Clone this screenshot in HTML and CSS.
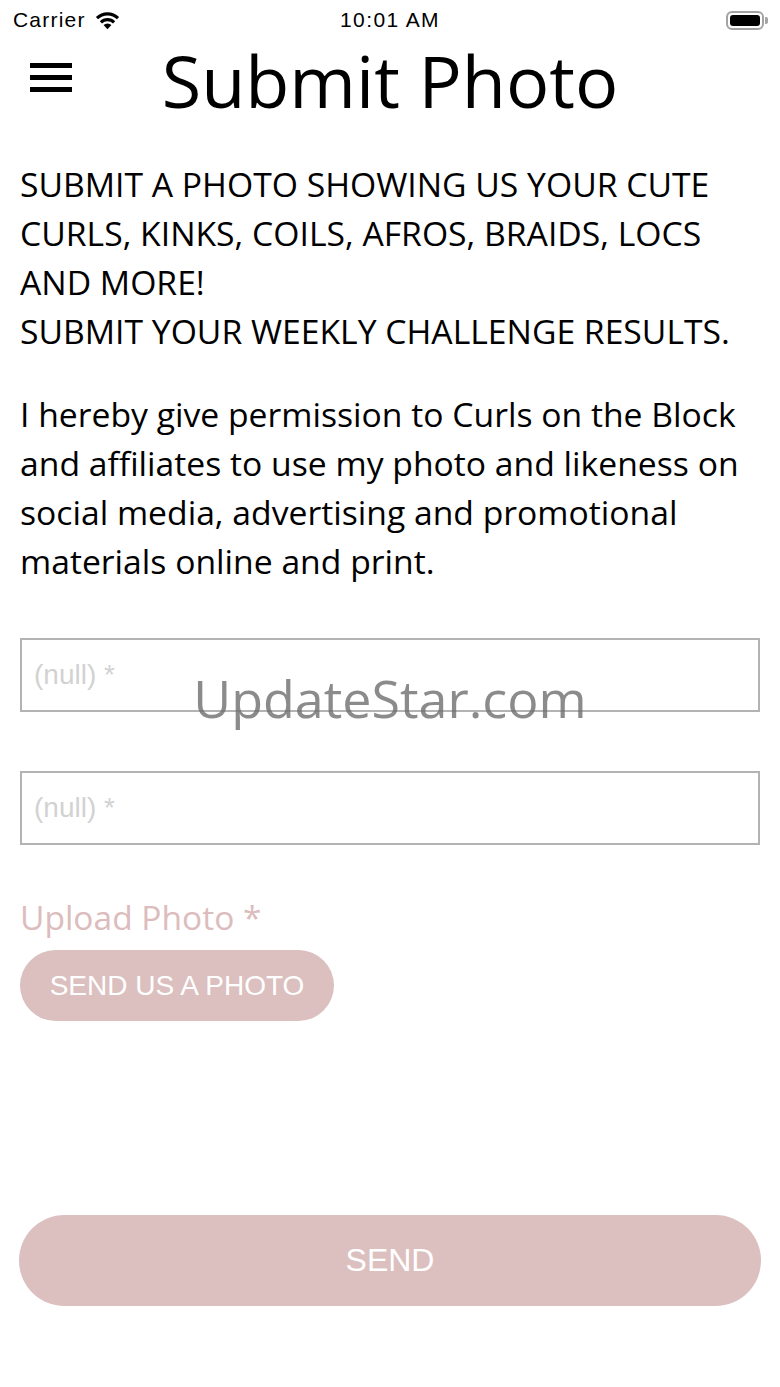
FILE: index.html
```html
<!DOCTYPE html>
<html lang="en">
<head>
    <meta charset="UTF-8">
    <meta name="viewport" content="width=device-width, initial-scale=1.0">
    <title>Submit Photo</title>
    <link rel="stylesheet" href="styles.css">
</head>
<body>
    <!-- Status bar -->
    <div class="status-bar">
        <div class="status-left">
            <span>Carrier</span>
            <svg class="wifi" width="27" height="20" viewBox="0 0 26 19">
                <path d="M13 18.5 L9.2 14.4 A5.6 5.6 0 0 1 16.8 14.4 Z" fill="#000"/>
                <path d="M5.6 10.6 A10.6 10.6 0 0 1 20.4 10.6 L18.3 12.8 A7.6 7.6 0 0 0 7.7 12.8 Z" fill="#000"/>
                <path d="M1.8 6.6 A16 16 0 0 1 24.2 6.6 L22.1 8.8 A13 13 0 0 0 3.9 8.8 Z" fill="#000"/>
            </svg>
        </div>
        <div class="status-time">10:01 AM</div>
        <div class="status-right">
            <div class="battery"><div class="battery-level"></div></div>
            <div class="battery-tip"></div>
        </div>
    </div>

    <!-- Header -->
    <div class="header">
        <div class="menu-icon">
            <span></span><span></span><span></span>
        </div>
        <h1>Submit Photo</h1>
    </div>

    <div class="content">
        <p class="intro">SUBMIT A PHOTO SHOWING US YOUR CUTE CURLS, KINKS, COILS, AFROS, BRAIDS, LOCS AND MORE!<br>SUBMIT YOUR WEEKLY CHALLENGE RESULTS.</p>

        <p class="permission">I hereby give permission to Curls on the Block and affiliates to use my photo and likeness on social media, advertising and promotional materials online and print.</p>

        <div class="fields">
            <input type="text" placeholder="(null) *">
            <input type="text" placeholder="(null) *">
            <div class="watermark">UpdateStar.com</div>
        </div>

        <div class="upload-label">Upload Photo *</div>
        <button class="photo-button">SEND US A PHOTO</button>

        <button class="send-button">SEND</button>
    </div>
</body>
</html>
```

FILE: styles.css
```css
body {
    margin: 0;
    padding: 0;
    width: 780px;
    height: 1387px;
    background-color: white;
    color: black;
    font-family: 'Open Sans', sans-serif;
    overflow: hidden;
}

.status-bar {
    height: 40px;
    display: flex;
    align-items: center;
    justify-content: space-between;
    padding: 0 12px 0 13px;
    font-family: 'Liberation Sans', Arial, sans-serif;
    font-size: 21px;
    letter-spacing: 1.2px;
    position: relative;
}

.status-left {
    display: flex;
    align-items: center;
    gap: 8px;
}

.status-time {
    position: absolute;
    left: 0;
    right: 0;
    text-align: center;
    font-size: 21px;
    letter-spacing: 1.4px;
}

.status-right {
    display: flex;
    align-items: center;
}

.battery {
    width: 38px;
    height: 19px;
    border: 2px solid #a3a3a3;
    border-radius: 6px;
    box-sizing: border-box;
    padding: 2px;
}

.battery-level {
    width: 100%;
    height: 100%;
    background-color: black;
    border-radius: 3px;
}

.battery-tip {
    width: 3px;
    height: 7px;
    background-color: #a3a3a3;
    border-radius: 0 2px 2px 0;
    margin-left: 1px;
}

.header {
    height: 80px;
    display: flex;
    align-items: center;
    position: relative;
}

.menu-icon {
    position: absolute;
    left: 30px;
    top: 23px;
    width: 42px;
    display: flex;
    flex-direction: column;
    gap: 7px;
}

.menu-icon span {
    display: block;
    height: 5px;
    background-color: black;
}

.header h1 {
    flex: 1;
    margin: 0;
    text-align: center;
    font-weight: normal;
    font-size: 72px;
    line-height: 80px;
}

.content {
    padding: 0 20px;
}

.intro, .permission {
    margin: 0;
    font-size: 33.7px;
    line-height: 49px;
}

.intro {
    margin-top: 40px;
}

.permission {
    margin-top: 34px;
}

.fields {
    position: relative;
    margin-top: 52px;
    display: flex;
    flex-direction: column;
    gap: 59px;
}

.fields input {
    height: 74px;
    box-sizing: border-box;
    border: 2px solid #b3b3b3;
    padding: 0 12px;
    font-family: 'Liberation Sans', Arial, sans-serif;
    font-size: 28px;
    outline: none;
}

.fields input::placeholder {
    color: #d2d2d2;
}

.watermark {
    position: absolute;
    top: 24px;
    left: 0;
    right: 0;
    text-align: center;
    font-size: 52px;
    color: rgba(110, 110, 110, 0.8);
    pointer-events: none;
}

.upload-label {
    margin-top: 50px;
    font-size: 33.5px;
    line-height: 44px;
    color: #dcbcbd;
}

.photo-button {
    margin-top: 11px;
    width: 314px;
    height: 71px;
    border: none;
    border-radius: 36px;
    background-color: #dcbfbf;
    color: white;
    font-family: 'Liberation Sans', Arial, sans-serif;
    font-size: 28px;
    display: block;
}

.send-button {
    margin-top: 194px;
    width: 742px;
    height: 91px;
    margin-left: -1px;
    border: none;
    border-radius: 46px;
    background-color: #dcbfbf;
    color: white;
    font-family: 'Liberation Sans', Arial, sans-serif;
    font-size: 32px;
    display: block;
}
```
